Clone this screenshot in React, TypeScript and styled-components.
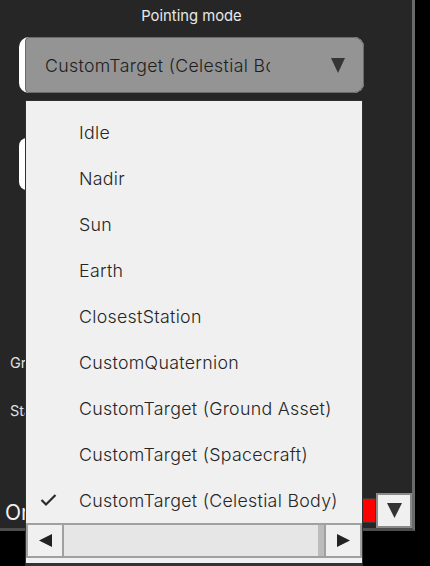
import React from 'react'
import styled, { createGlobalStyle } from 'styled-components'

const GlobalStyle = createGlobalStyle`
  html, body {
    margin: 0;
    padding: 0;
    background: #000;
    font-family: Inter, "Noto Sans", sans-serif;
  }
`;

const Page = styled.div`
  position: relative;
  width: 430px;
  height: 566px;
  overflow: hidden;
  background: #000;
`;

const Panel = styled.div`
  width: 412px;
  height: 528px;
  background: #262626;
  border-right: 3px solid #6a6a6a;
  border-bottom: 3px solid #4e4e4e;
  display: flex;
  flex-direction: column;
`;

const Content = styled.div`
  width: 345px;
  margin-left: 19px;
  display: flex;
  flex-direction: column;
`;

const Title = styled.div`
  height: 32px;
  line-height: 32px;
  text-align: center;
  color: #e8e8e8;
  font-size: 14.8px;
`;

const SelectShell = styled.div`
  margin-top: 5px;
  height: 56px;
  background: #fff;
  border-radius: 10px;
  padding-left: 6px;
  display: flex;
`;

const SelectButton = styled.div`
  flex: 1;
  background: #949494;
  border: 1px solid #6a6a6a;
  border-radius: 4px 10px 10px 4px;
  display: flex;
  align-items: center;
  padding-left: 19px;
  padding-right: 18px;
`;

const SelectValue = styled.span`
  width: 225px;
  overflow: hidden;
  white-space: nowrap;
  font-size: 17.7px;
  font-weight: 300;
  letter-spacing: 0.35px;
  color: #1e1e1e;
`;

const Caret = styled.svg`
  margin-left: auto;
  display: block;
`;

const WhiteField = styled.div`
  margin-top: 45px;
  width: 300px;
  height: 52px;
  background: #fff;
  border-radius: 8px;
`;

const Rows = styled.div`
  margin-top: 148px;
  display: flex;
  flex-direction: column;
`;

const Row = styled.div`
  height: 48px;
  display: flex;
  align-items: center;
  padding-left: 10px;
  color: #e0e0e0;
  font-size: 14.5px;
`;

const BottomRow = styled.div`
  margin-top: auto;
  height: 35px;
  display: flex;
  align-items: center;
`;

const BigLabel = styled.span`
  padding-left: 5px;
  color: #f0f0f0;
  font-size: 21px;
  margin-top: 4px;
`;

const ColorSwatch = styled.div`
  margin-left: auto;
  width: 300px;
  height: 25px;
  background: #ff0000;
  border: 1px solid #3a3a3a;
  box-sizing: border-box;
`;

const DropButton = styled.div`
  width: 36px;
  height: 35px;
  box-sizing: border-box;
  background: #f0f0f0;
  border: 2px solid #8a8a8a;
  display: flex;
  align-items: center;
  justify-content: center;
`;

const Popup = styled.div`
  position: absolute;
  left: 25px;
  top: 100px;
  width: 338px;
  height: 466px;
  box-sizing: border-box;
  background: #f0f0f0;
  border: 1px solid #303030;
  border-bottom: 3px solid #333;
  padding-top: 8px;
  display: flex;
  flex-direction: column;
`;

const Item = styled.div`
  height: 46px;
  flex-shrink: 0;
  display: flex;
  align-items: center;
  font-size: 17.8px;
  font-weight: 300;
  letter-spacing: 0.3px;
  color: #262626;
  white-space: nowrap;
`;

const CheckSlot = styled.span`
  width: 53px;
  padding-left: 14px;
  box-sizing: border-box;
  display: flex;
  align-items: center;
`;

const ScrollBar = styled.div`
  height: 35px;
  flex-shrink: 0;
  box-sizing: border-box;
  border: 2px solid #a0a0a0;
  background: #bcbcbc;
  display: flex;
`;

const ScrollButton = styled.div<{ $side: 'left' | 'right' }>`
  width: 34px;
  background: #f0f0f0;
  display: flex;
  align-items: center;
  justify-content: center;
  ${p => (p.$side === 'left' ? 'border-right: 2px solid #a0a0a0;' : 'border-left: 2px solid #a0a0a0;')}
`;

const Thumb = styled.div`
  width: 254px;
  background: #e6e6e6;
`;

const Track = styled.div`
  flex: 1;
`;

const options = [
  'Idle',
  'Nadir',
  'Sun',
  'Earth',
  'ClosestStation',
  'CustomQuaternion',
  'CustomTarget (Ground Asset)',
  'CustomTarget (Spacecraft)',
  'CustomTarget (Celestial Body)',
];

const selected = 'CustomTarget (Celestial Body)';

const Triangle = ({ dir, size, color }: { dir: 'down' | 'left' | 'right'; size: number; color: string }) => {
  const pts =
    dir === 'down' ? '0,0 14,0 7,14' : dir === 'left' ? '12,0 12,12 0,6' : '0,0 0,12 12,6';
  const vb = dir === 'down' ? '0 0 14 14' : '0 0 12 12';
  return (
    <svg width={size} height={size} viewBox={vb} style={{ display: 'block' }}>
      <polygon points={pts} fill={color} />
    </svg>
  );
};

const App: React.FC = () => {
  return (
    <>
      <GlobalStyle />
      <Page>
        <Panel>
          <Content>
            <Title>Pointing mode</Title>
            <SelectShell>
              <SelectButton>
                <SelectValue>{selected}</SelectValue>
                <Caret width="14" height="15" viewBox="0 0 14 15">
                  <polygon points="0,0 14,0 7,15" fill="#353535" />
                </Caret>
              </SelectButton>
            </SelectShell>
            <WhiteField />
          </Content>
          <Rows>
            <Row>Ground station</Row>
            <Row>Star tracker</Row>
          </Rows>
          <BottomRow>
            <BigLabel>Orbit</BigLabel>
            <ColorSwatch />
            <DropButton>
              <Triangle dir="down" size={15} color="#333" />
            </DropButton>
          </BottomRow>
        </Panel>

        <Popup>
          {options.map(o => (
            <Item key={o}>
              <CheckSlot>
                {o === selected && (
                  <svg width="17" height="14" viewBox="0 0 17 14">
                    <polyline points="1.5,7 6,11.5 15.5,2" fill="none" stroke="#2a2a2a" strokeWidth="2.2" />
                  </svg>
                )}
              </CheckSlot>
              {o}
            </Item>
          ))}
          <ScrollBar>
            <ScrollButton $side="left">
              <Triangle dir="left" size={13} color="#222" />
            </ScrollButton>
            <Thumb />
            <Track />
            <ScrollButton $side="right">
              <Triangle dir="right" size={13} color="#222" />
            </ScrollButton>
          </ScrollBar>
        </Popup>
      </Page>
    </>
  );
};

export default App;
